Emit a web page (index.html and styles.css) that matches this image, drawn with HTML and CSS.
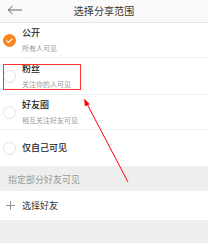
FILE: index.html
```html
<!DOCTYPE html>
<html>
<head>
<meta charset="utf-8">
<link rel="stylesheet" href="styles.css">
</head>
<body>
<div class="page">
  <header class="topbar">
    <svg class="back" width="16" height="10" viewBox="0 0 16 10"><path d="M15 5H1.5M5.5 1L1.2 5L5.5 9" fill="none" stroke="#666" stroke-width="1"/></svg>
    <div class="title">选择分享范围</div>
  </header>
  <div class="list">
    <div class="row r1">
      <span class="radio on"><svg width="13" height="13" viewBox="0 0 13 13"><path d="M3.6 6.6L5.6 8.5L9.4 4.6" fill="none" stroke="#fff" stroke-width="1.2"/></svg></span>
      <div class="texts"><div class="main">公开</div><div class="sub">所有人可见</div></div>
    </div>
    <div class="row r2">
      <span class="radio"></span>
      <div class="texts"><div class="main">粉丝</div><div class="sub">关注你的人可见</div></div>
    </div>
    <div class="row r3">
      <span class="radio"></span>
      <div class="texts"><div class="main">好友圈</div><div class="sub">相互关注好友可见</div></div>
    </div>
    <div class="row r4">
      <span class="radio"></span>
      <div class="texts"><div class="main solo">仅自己可见</div></div>
    </div>
  </div>
  <div class="section">指定部分好友可见</div>
  <div class="addrow">
    <svg class="plus" width="9" height="9" viewBox="0 0 9 9"><path d="M4.5 0V9M0 4.5H9" stroke="#888" stroke-width="0.9"/></svg>
    <span class="addtext">选择好友</span>
  </div>
  <div class="highlight"></div>
  <svg class="arrow" width="208" height="243" viewBox="0 0 208 243">
    <line x1="128" y1="182" x2="86.5" y2="103" stroke="#f00" stroke-width="1"/>
    <path d="M84.2 98.5L89.6 104.2L84.8 106.3Z" fill="#f00"/>
  </svg>
</div>
</body>
</html>
```
FILE: styles.css
```css
* { box-sizing: border-box; }
html, body { margin: 0; padding: 0; }
body {
  width: 208px;
  height: 243px;
  background: #eeeeee;
  font-family: "Noto Sans CJK SC", "Noto Sans", sans-serif;
  overflow: hidden;
}
.page { position: relative; width: 208px; height: 243px; }
.topbar {
  height: 23px;
  background: #f9f9f9;
  border-bottom: 1px solid #e6e6e6;
  display: flex;
  align-items: center;
  justify-content: center;
  position: relative;
}
.back { position: absolute; left: 7px; top: 5px; }
.title { font-size: 10px; color: #333; line-height: 12px; margin-top: -1px; letter-spacing: 0.1px; }
.list { background: #fff; }
.row {
  display: flex;
  align-items: center;
  padding-left: 3px;
  border-bottom: 1px solid #efefef;
}
.r1 { height: 35px; }
.r2 { height: 37px; }
.r3 { height: 35px; }
.r4 { height: 36px; border-bottom: none; }
.radio {
  width: 13px; height: 13px;
  border-radius: 50%;
  border: 1px solid #e2e2e2;
  background: #fff;
  flex: none;
  display: flex;
}
.radio.on { background: #f7861e; border-color: #f7861e; }
.radio.on svg { margin: -1px; }
.texts { margin-left: 6px; display: flex; flex-direction: column; }
.main { font-size: 9px; line-height: 12px; color: #222; font-weight: 500; }
.main.solo { font-size: 9px; }
.sub { font-size: 7px; line-height: 10px; color: #999; margin-top: 4px; }
.section {
  height: 25px;
  padding-left: 8px;
  display: flex;
  align-items: center;
  font-size: 9px;
  color: #999;
  padding-top: 2px;
}
.addrow {
  height: 29px;
  background: #fff;
  display: flex;
  align-items: center;
  padding-left: 6px;
}
.plus { flex: none; }
.addtext { margin-left: 7px; font-size: 9px; color: #333; }
.highlight {
  position: absolute;
  left: 3px; top: 64px;
  width: 78px; height: 26px;
  border: 1.5px solid #f33;
}
.arrow { position: absolute; left: 0; top: 0; }
```
